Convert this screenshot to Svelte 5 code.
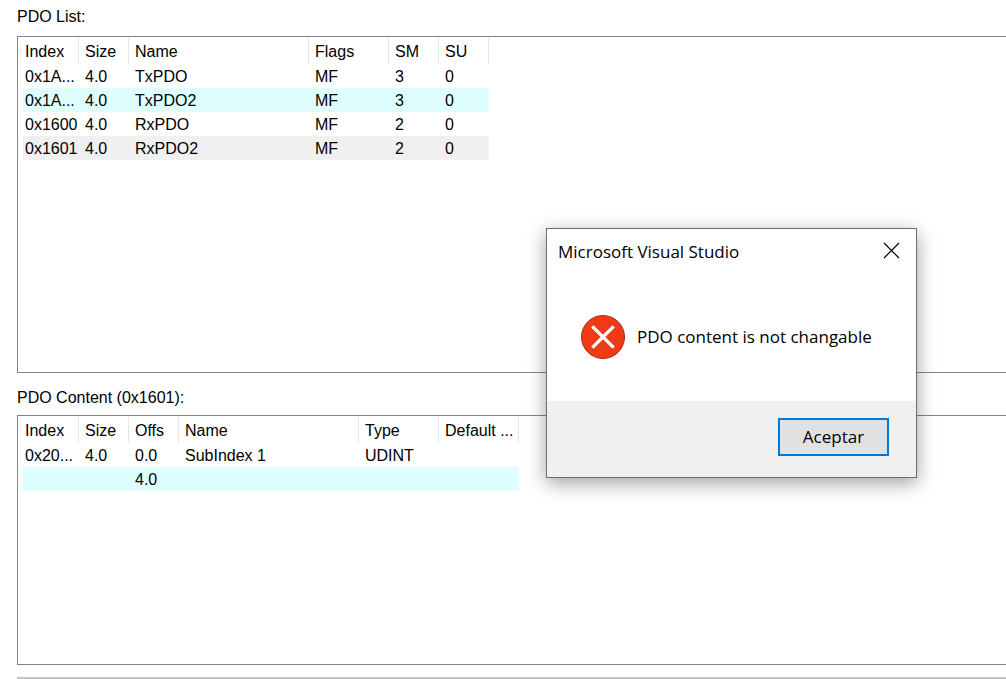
<script>
  const pdoColumns = [
    { label: 'Index', width: 56 },
    { label: 'Size', width: 50 },
    { label: 'Name', width: 180 },
    { label: 'Flags', width: 80 },
    { label: 'SM', width: 50 },
    { label: 'SU', width: 50 }
  ];
  const pdoRows = [
    { cells: ['0x1A...', '4.0', 'TxPDO', 'MF', '3', '0'] },
    { cells: ['0x1A...', '4.0', 'TxPDO2', 'MF', '3', '0'], tone: 'tinted' },
    { cells: ['0x1600', '4.0', 'RxPDO', 'MF', '2', '0'] },
    { cells: ['0x1601', '4.0', 'RxPDO2', 'MF', '2', '0'], tone: 'selected' }
  ];
  const contentColumns = [
    { label: 'Index', width: 56 },
    { label: 'Size', width: 50 },
    { label: 'Offs', width: 50 },
    { label: 'Name', width: 180 },
    { label: 'Type', width: 80 },
    { label: 'Default ...', width: 80 }
  ];
  const contentRows = [
    { cells: ['0x20...', '4.0', '0.0', 'SubIndex 1', 'UDINT', ''] },
    { cells: ['', '', '4.0', '', '', ''], tone: 'tinted' }
  ];

  let open = $state(true);
  const close = () => (open = false);
</script>

{#snippet grid(columns, rows, labelId)}
  <table aria-labelledby={labelId} style="width: {columns.reduce((sum, c) => sum + c.width, 0)}px">
    <colgroup>
      {#each columns as column}<col style="width: {column.width}px" />{/each}
    </colgroup>
    <thead>
      <tr>{#each columns as column}<th scope="col">{column.label}</th>{/each}</tr>
    </thead>
    <tbody>
      {#each rows as row}
        <tr class={row.tone}>{#each row.cells as cell}<td>{cell}</td>{/each}</tr>
      {/each}
    </tbody>
  </table>
{/snippet}

<main>
  <h2 id="pdo-list">PDO List:</h2>
  <section class="list upper">{@render grid(pdoColumns, pdoRows, 'pdo-list')}</section>
  <h2 id="pdo-content" class="second">PDO Content (0x1601):</h2>
  <section class="list lower">{@render grid(contentColumns, contentRows, 'pdo-content')}</section>
  <hr />
</main>

{#if open}
  <div class="dialog" role="alertdialog" aria-labelledby="dialog-title" aria-describedby="dialog-text">
    <header>
      <h1 id="dialog-title">Microsoft Visual Studio</h1>
      <button class="close" aria-label="Close" onclick={close}>
        <svg width="17" height="17" viewBox="0 0 17 17" aria-hidden="true">
          <path d="M1 1L16 16M16 1L1 16" fill="none" stroke="#000" stroke-width="1.2" />
        </svg>
      </button>
    </header>
    <div class="message">
      <svg width="44" height="44" viewBox="0 0 44 44" aria-hidden="true">
        <circle cx="22" cy="22" r="21.5" fill="#f03a17" stroke="#a52c1b" />
        <path d="M11.3 11.3L32.7 32.7M32.7 11.3L11.3 32.7" fill="none" stroke="#fff" stroke-width="3.3" />
      </svg>
      <p id="dialog-text">PDO content is not changable</p>
    </div>
    <footer>
      <button class="accept" onclick={close}>Aceptar</button>
    </footer>
  </div>
{/if}

<style>
  :global(body) {
    margin: 0;
    background: #fff;
  }
  main {
    box-sizing: border-box;
    display: flex;
    flex-direction: column;
    min-height: 100vh;
    padding-left: 17px;
    overflow: hidden;
    color: #000;
    font: 16px/24px "Liberation Sans", Arial, sans-serif;
  }
  h2 {
    margin: 0;
    padding: 5px 0 7px;
    font: inherit;
  }
  .second {
    padding: 13px 0 5px;
  }
  .list {
    box-sizing: border-box;
    padding: 1px 0 0 5px;
    border: 1px solid #828790;
    border-right: 0;
  }
  .upper {
    flex: 337 1 0;
  }
  .lower {
    flex: 250 1 0;
  }
  table {
    table-layout: fixed;
    border-collapse: separate;
    border-spacing: 0;
  }
  th,
  td {
    box-sizing: border-box;
    height: 24px;
    padding: 2px 0 0 6px;
    font-weight: 400;
    line-height: 22px;
    text-align: left;
    white-space: nowrap;
  }
  th {
    height: 26px;
    border-right: 1px solid #e5e5e5;
  }
  th:first-child,
  td:first-child {
    padding-left: 2px;
  }
  .tinted {
    background: #dfffff;
  }
  .selected {
    background: #f0f0f0;
  }
  hr {
    width: 100%;
    height: 2px;
    margin: 12px 0 0;
    border: 0;
    background: #c3c3c3;
  }
  .dialog {
    position: absolute;
    top: 228px;
    left: 546px;
    box-sizing: border-box;
    display: flex;
    flex-direction: column;
    width: 371px;
    border: 1px solid #6d6d6d;
    background: #fff;
    box-shadow: 0 5px 18px rgba(0, 0, 0, 0.38);
    color: #000;
    font: 17px/24px "Open Sans", "Segoe UI", sans-serif;
  }
  header {
    display: flex;
    align-items: center;
    justify-content: space-between;
    height: 43px;
    padding: 0 16px 0 11px;
  }
  h1 {
    margin: 0;
    padding-top: 3px;
    font: inherit;
  }
  button {
    border: 0;
    color: inherit;
    font: inherit;
  }
  .close {
    display: flex;
    padding: 0;
    background: none;
  }
  .message {
    display: flex;
    align-items: center;
    gap: 12px;
    padding: 43px 34px 42px;
  }
  p {
    margin: 0;
    white-space: nowrap;
  }
  footer {
    display: flex;
    justify-content: flex-end;
    padding: 17px 27px 21px;
    background: #f0f0f0;
  }
  .accept {
    box-sizing: border-box;
    width: 111px;
    height: 38px;
    padding: 0;
    border: 2px solid #0078d7;
    background: #e1e1e1;
  }
</style>
